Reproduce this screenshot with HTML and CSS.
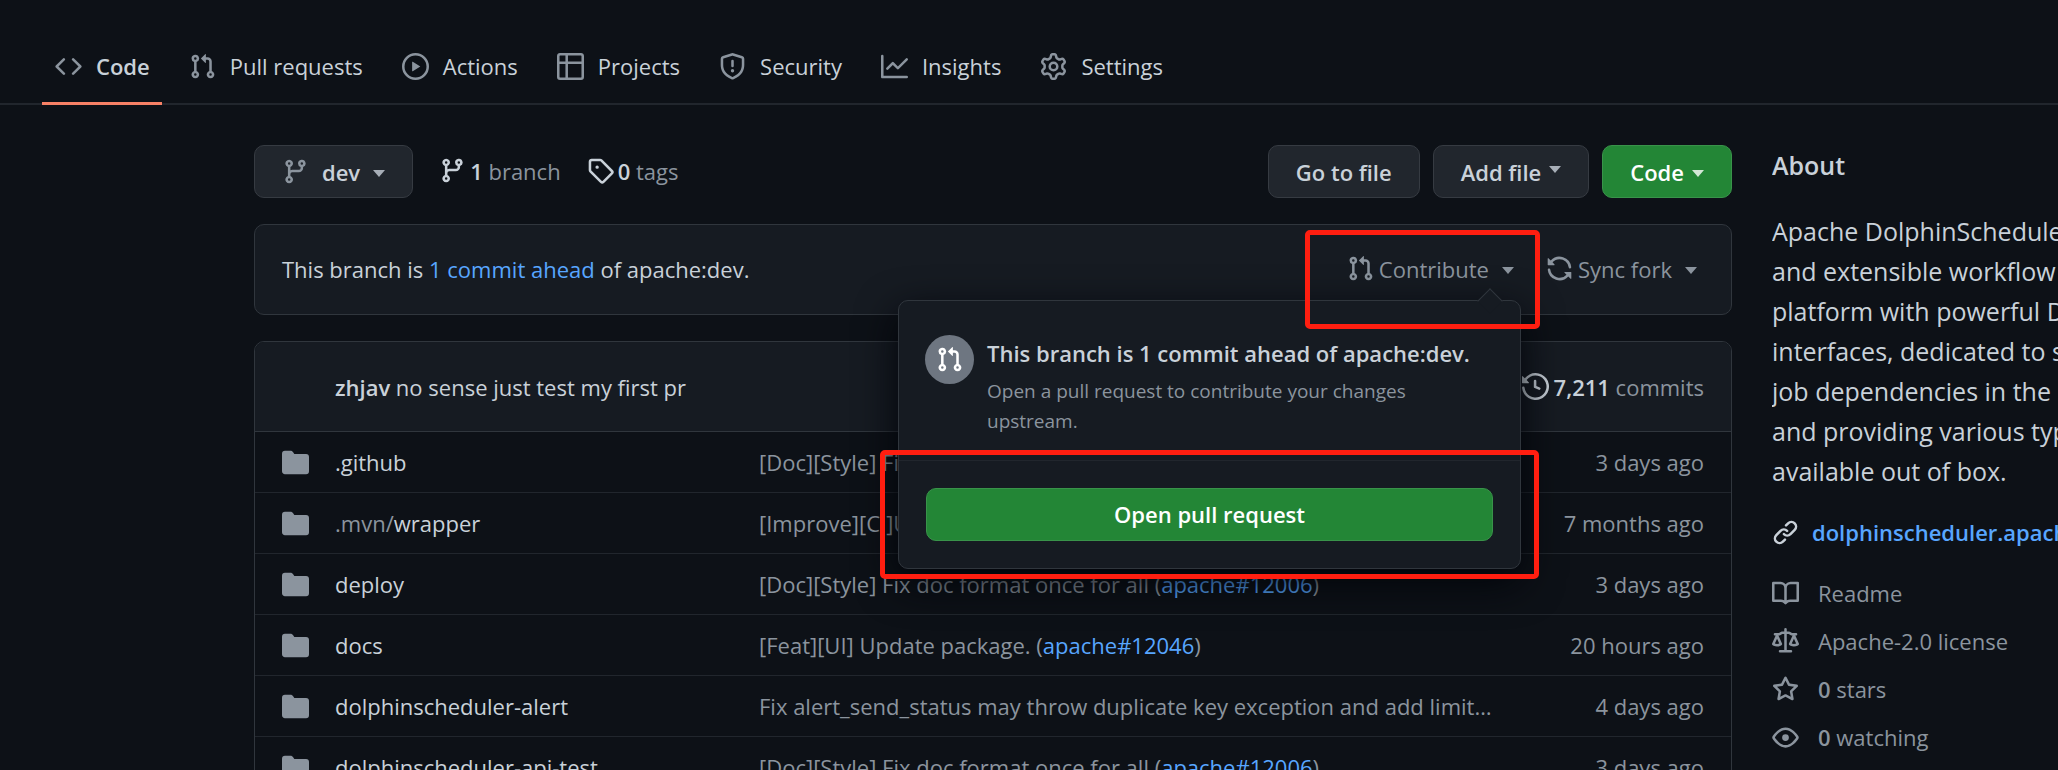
FILE: index.html
```html
<!DOCTYPE html>
<html lang="en">
<head>
<meta charset="utf-8">
<title>dolphinscheduler</title>
<link rel="stylesheet" href="styles.css">
</head>
<body>
<svg class="sprite" aria-hidden="true">
  <symbol id="code" viewBox="0 0 16 16"><path d="M4.72 3.22a.75.75 0 011.06 1.06L2.06 8l3.72 3.72a.75.75 0 11-1.06 1.06L.47 8.53a.75.75 0 010-1.06l4.25-4.25zm6.56 0a.75.75 0 10-1.06 1.06L13.94 8l-3.72 3.72a.75.75 0 101.06 1.06l4.25-4.25a.75.75 0 000-1.06l-4.25-4.25z"/></symbol>
  <symbol id="pr" viewBox="0 0 16 16"><path fill-rule="evenodd" d="M7.177 3.073L9.573.677A.25.25 0 0110 .854v4.792a.25.25 0 01-.427.177L7.177 3.427a.25.25 0 010-.354zM3.75 2.5a.75.75 0 100 1.5.75.75 0 000-1.5zm-2.25.75a2.25 2.25 0 113 2.122v5.256a2.251 2.251 0 11-1.5 0V5.372A2.25 2.25 0 011.5 3.25zM11 2.5h-1V4h1a1 1 0 011 1v5.628a2.251 2.251 0 101.5 0V5A2.5 2.5 0 0011 2.5zm1 10.25a.75.75 0 111.5 0 .75.75 0 01-1.5 0zM3.75 12a.75.75 0 100 1.5.75.75 0 000-1.5z"/></symbol>
  <symbol id="branch" viewBox="0 0 16 16"><path fill-rule="evenodd" d="M11.75 2.5a.75.75 0 100 1.5.75.75 0 000-1.5zm-2.25.75a2.25 2.25 0 113 2.122V6A2.5 2.5 0 0110 8.5H6a1 1 0 00-1 1v1.128a2.251 2.251 0 11-1.5 0V5.372a2.25 2.25 0 111.5 0v1.836A2.492 2.492 0 016 7h4a1 1 0 001-1v-.628A2.25 2.25 0 019.5 3.25zM4.25 12a.75.75 0 100 1.5.75.75 0 000-1.5zM3.5 3.25a.75.75 0 111.5 0 .75.75 0 01-1.5 0z"/></symbol>
  <symbol id="play" viewBox="0 0 16 16"><path fill-rule="evenodd" d="M1.5 8a6.5 6.5 0 1113 0 6.5 6.5 0 01-13 0zM8 0a8 8 0 100 16A8 8 0 008 0zM6.379 5.227A.25.25 0 006 5.442v5.117a.25.25 0 00.379.214l4.264-2.559a.25.25 0 000-.428L6.379 5.227z"/></symbol>
  <symbol id="table" viewBox="0 0 16 16"><path fill-rule="evenodd" d="M0 1.75C0 .784.784 0 1.75 0h12.5C15.216 0 16 .784 16 1.75v12.5A1.75 1.75 0 0114.25 16H1.75A1.75 1.75 0 010 14.25V1.75zM1.5 6.5v7.75c0 .138.112.25.25.25H5v-8H1.5zM6.5 6.5v8h7.75a.25.25 0 00.25-.25V6.5h-8zM14.5 5V1.75a.25.25 0 00-.25-.25H6.5V5h8zM5 5V1.5H1.75a.25.25 0 00-.25.25V5H5z"/></symbol>
  <symbol id="shield" viewBox="0 0 16 16"><path fill-rule="evenodd" d="M7.467.133a1.75 1.75 0 011.066 0l5.25 1.68A1.75 1.75 0 0115 3.48V7c0 1.566-.32 3.182-1.303 4.682-.983 1.498-2.585 2.813-5.032 3.855a1.7 1.7 0 01-1.33 0c-2.447-1.042-4.049-2.357-5.032-3.855C1.32 10.182 1 8.566 1 7V3.48a1.75 1.75 0 011.217-1.667l5.25-1.68zm.61 1.429a.25.25 0 00-.153 0l-5.25 1.68a.25.25 0 00-.174.238V7c0 1.358.275 2.666 1.057 3.86.784 1.194 2.121 2.34 4.366 3.297a.2.2 0 00.154 0c2.245-.956 3.582-2.104 4.366-3.298C13.225 9.666 13.5 8.36 13.5 7V3.48a.25.25 0 00-.174-.237l-5.25-1.68zM9 10.5a1 1 0 11-2 0 1 1 0 012 0zm-.25-5.75a.75.75 0 10-1.5 0v3a.75.75 0 001.5 0v-3z"/></symbol>
  <symbol id="graph" viewBox="0 0 16 16"><path fill-rule="evenodd" d="M1.5 1.75a.75.75 0 00-1.5 0v12.5c0 .414.336.75.75.75h14.5a.75.75 0 000-1.5H1.5V1.75zm14.28 2.53a.75.75 0 00-1.06-1.06L10 7.94 7.53 5.47a.75.75 0 00-1.06 0L3.22 8.72a.75.75 0 001.06 1.06L7 7.06l2.47 2.47a.75.75 0 001.06 0l5.25-5.25z"/></symbol>
  <symbol id="gear" viewBox="0 0 16 16"><path fill-rule="evenodd" d="M7.429 1.525a6.593 6.593 0 011.142 0c.036.003.108.036.137.146l.289 1.105c.147.56.55.967.997 1.189.174.086.341.183.501.29.417.278.97.423 1.53.27l1.102-.303c.11-.03.175.016.195.046.219.31.41.641.573.989.014.031.022.11-.059.19l-.815.806c-.411.406-.562.957-.53 1.456a4.588 4.588 0 010 .582c-.032.499.119 1.05.53 1.456l.815.806c.08.08.073.159.059.19a6.494 6.494 0 01-.573.99c-.02.029-.086.074-.195.045l-1.103-.303c-.559-.153-1.112-.008-1.529.27-.16.107-.327.204-.5.29-.449.222-.851.628-.998 1.189l-.289 1.105c-.029.11-.101.143-.137.146a6.613 6.613 0 01-1.142 0c-.036-.003-.108-.037-.137-.146l-.289-1.105c-.147-.56-.55-.967-.997-1.189a4.502 4.502 0 01-.501-.29c-.417-.278-.97-.423-1.53-.27l-1.102.303c-.11.03-.175-.016-.195-.046a6.492 6.492 0 01-.573-.989c-.014-.031-.022-.11.059-.19l.815-.806c.411-.406.562-.957.53-1.456a4.587 4.587 0 010-.582c.032-.499-.119-1.05-.53-1.456l-.815-.806c-.08-.08-.073-.159-.059-.19a6.44 6.44 0 01.573-.99c.02-.029.086-.075.195-.045l1.103.303c.559.153 1.112.008 1.529-.27.16-.107.327-.204.5-.29.449-.222.851-.628.998-1.189l.289-1.105c.029-.11.101-.143.137-.146zM8 0c-.236 0-.47.01-.701.03-.743.065-1.29.615-1.458 1.261l-.29 1.106c-.017.066-.078.158-.211.224a5.994 5.994 0 00-.668.386c-.123.082-.233.09-.3.071L3.27 2.776c-.644-.177-1.392.02-1.82.63a7.977 7.977 0 00-.704 1.217c-.315.675-.111 1.422.363 1.891l.815.806c.05.048.098.147.088.294a6.084 6.084 0 000 .772c.01.147-.038.246-.088.294l-.815.806c-.474.469-.678 1.216-.363 1.891.2.428.436.835.704 1.218.428.609 1.176.806 1.82.63l1.103-.303c.066-.019.176-.011.299.071.213.143.436.272.668.386.133.066.194.158.212.224l.289 1.106c.169.646.715 1.196 1.458 1.26a8.094 8.094 0 001.402 0c.743-.064 1.29-.614 1.458-1.26l.29-1.106c.017-.066.078-.158.211-.224a5.98 5.98 0 00.668-.386c.123-.082.233-.09.3-.071l1.102.302c.644.177 1.392-.02 1.82-.63.268-.382.505-.789.704-1.217.315-.675.111-1.422-.364-1.891l-.814-.806c-.05-.048-.098-.147-.088-.294a6.1 6.1 0 000-.772c-.01-.147.039-.246.088-.294l.814-.806c.475-.469.679-1.216.364-1.891a7.992 7.992 0 00-.704-1.218c-.428-.609-1.176-.806-1.82-.63l-1.103.303c-.066.019-.176.011-.299-.071a5.991 5.991 0 00-.668-.386c-.133-.066-.194-.158-.212-.224L10.16 1.29C9.99.645 9.444.095 8.701.031A8.094 8.094 0 008 0zm1.5 8a1.5 1.5 0 11-3 0 1.5 1.5 0 013 0zM11 8a3 3 0 11-6 0 3 3 0 016 0z"/></symbol>
  <symbol id="tag" viewBox="0 0 16 16"><path fill-rule="evenodd" d="M2.5 7.775V2.75a.25.25 0 01.25-.25h5.025a.25.25 0 01.177.073l6.25 6.25a.25.25 0 010 .354l-5.025 5.025a.25.25 0 01-.354 0l-6.25-6.25a.25.25 0 01-.073-.177zm-1.5 0V2.75C1 1.784 1.784 1 2.75 1h5.025c.464 0 .91.184 1.238.513l6.25 6.25a1.75 1.75 0 010 2.474l-5.026 5.026a1.75 1.75 0 01-2.474 0l-6.25-6.25A1.75 1.75 0 011 7.775zM6 5a1 1 0 100 2 1 1 0 000-2z"/></symbol>
  <symbol id="sync" viewBox="0 0 16 16"><path fill-rule="evenodd" d="M8 2.5a5.487 5.487 0 00-4.131 1.869l1.204 1.204A.25.25 0 014.896 6H1.25A.25.25 0 011 5.75V2.104a.25.25 0 01.427-.177l1.38 1.38A7.001 7.001 0 0114.95 7.16a.75.75 0 11-1.49.178A5.501 5.501 0 008 2.5zM1.705 8.005a.75.75 0 01.834.656 5.501 5.501 0 009.592 2.97l-1.204-1.204a.25.25 0 01.177-.427h3.646a.25.25 0 01.25.25v3.646a.25.25 0 01-.427.177l-1.38-1.38A7.001 7.001 0 011.05 8.84a.75.75 0 01.656-.834z"/></symbol>
  <symbol id="history" viewBox="0 0 16 16"><path fill-rule="evenodd" d="M1.643 3.143L.427 1.927A.25.25 0 000 2.104V5.75c0 .138.112.25.25.25h3.646a.25.25 0 00.177-.427L2.715 4.215a6.5 6.5 0 11-1.18 4.458.75.75 0 10-1.493.154 8.001 8.001 0 101.6-5.684zM7.75 4a.75.75 0 01.75.75v2.992l2.028.812a.75.75 0 01-.557 1.392l-2.5-1A.75.75 0 017 8.25v-3.5A.75.75 0 017.75 4z"/></symbol>
  <symbol id="folder" viewBox="0 0 16 16"><path d="M1.75 1A1.75 1.75 0 000 2.75v10.5C0 14.216.784 15 1.75 15h12.5A1.75 1.75 0 0016 13.25v-8.5A1.75 1.75 0 0014.25 3H7.5a.25.25 0 01-.2-.1l-.9-1.2C6.07 1.26 5.55 1 5 1H1.75z"/></symbol>
  <symbol id="link" viewBox="0 0 16 16"><path fill-rule="evenodd" d="M7.775 3.275a.75.75 0 001.06 1.06l1.25-1.25a2 2 0 112.83 2.83l-2.5 2.5a2 2 0 01-2.83 0 .75.75 0 00-1.06 1.06 3.5 3.5 0 004.95 0l2.5-2.5a3.5 3.5 0 00-4.95-4.95l-1.25 1.25zm-4.69 9.64a2 2 0 010-2.83l2.5-2.5a2 2 0 012.83 0 .75.75 0 001.06-1.06 3.5 3.5 0 00-4.95 0l-2.5 2.5a3.5 3.5 0 004.95 4.95l1.25-1.25a.75.75 0 00-1.06-1.06l-1.25 1.25a2 2 0 01-2.83 0z"/></symbol>
  <symbol id="book" viewBox="0 0 16 16"><path fill-rule="evenodd" d="M0 1.75A.75.75 0 01.75 1h4.253c1.227 0 2.317.59 3 1.501A3.744 3.744 0 0111.006 1h4.245a.75.75 0 01.75.75v10.5a.75.75 0 01-.75.75h-4.507a2.25 2.25 0 00-1.591.659l-.622.621a.75.75 0 01-1.06 0l-.622-.621A2.25 2.25 0 005.258 13H.75a.75.75 0 01-.75-.75V1.75zm8.755 3a2.25 2.25 0 012.25-2.25H14.5v9h-3.757c-.71 0-1.4.201-1.992.572l.004-7.322zm-1.504 7.324l.004-5.073-.002-2.253A2.25 2.25 0 005.003 2.5H1.5v9h3.757a3.75 3.75 0 011.994.574z"/></symbol>
  <symbol id="law" viewBox="0 0 16 16"><path fill-rule="evenodd" d="M8.75.75a.75.75 0 00-1.5 0V2h-.984c-.305 0-.604.08-.869.23l-1.288.737A.25.25 0 013.984 3H1.75a.75.75 0 000 1.5h.428L.066 9.192a.75.75 0 00.154.838l.53-.53-.53.53v.001l.002.002.002.002.006.006.016.015.045.04a3.514 3.514 0 00.686.45A4.492 4.492 0 003 11c.88 0 1.556-.22 2.023-.454a3.515 3.515 0 00.686-.45l.045-.04.016-.015.006-.006.002-.002.001-.002L5.25 9.5l.53.53a.75.75 0 00.154-.838L3.822 4.5h.162c.305 0 .604-.08.869-.23l1.289-.737a.25.25 0 01.124-.033h.984V13h-2.5a.75.75 0 000 1.5h6.5a.75.75 0 000-1.5h-2.5V3.5h.984a.25.25 0 01.124.033l1.29.736c.264.152.563.231.868.231h.162l-2.112 4.692a.75.75 0 00.154.838l.53-.53-.53.53v.001l.002.002.002.002.006.006.016.015.045.04a3.517 3.517 0 00.686.45A4.492 4.492 0 0013 11c.88 0 1.556-.22 2.023-.454a3.512 3.512 0 00.686-.45l.045-.04.01-.01.006-.005.006-.006.002-.002.001-.002-.529-.531.53.53a.75.75 0 00.154-.838L13.823 4.5h.427a.75.75 0 000-1.5h-2.234a.25.25 0 01-.124-.033l-1.29-.736A1.75 1.75 0 009.735 2H8.75V.75zM1.695 9.227c.285.135.718.273 1.305.273s1.02-.138 1.305-.273L3 6.327l-1.305 2.9zm10 0c.285.135.718.273 1.305.273s1.02-.138 1.305-.273L13 6.327l-1.305 2.9z"/></symbol>
  <symbol id="star" viewBox="0 0 16 16"><path fill-rule="evenodd" d="M8 .25a.75.75 0 01.673.418l1.882 3.815 4.21.612a.75.75 0 01.416 1.279l-3.046 2.97.719 4.192a.75.75 0 01-1.088.791L8 12.347l-3.766 1.98a.75.75 0 01-1.088-.79l.72-4.194L.818 6.374a.75.75 0 01.416-1.28l4.21-.611L7.327.668A.75.75 0 018 .25zm0 2.445L6.615 5.5a.75.75 0 01-.564.41l-3.097.45 2.24 2.184a.75.75 0 01.216.664l-.528 3.084 2.769-1.456a.75.75 0 01.698 0l2.77 1.456-.53-3.084a.75.75 0 01.216-.664l2.24-2.183-3.096-.45a.75.75 0 01-.564-.41L8 2.694v.001z"/></symbol>
  <symbol id="eye" viewBox="0 0 16 16"><path fill-rule="evenodd" d="M1.679 7.932c.412-.621 1.242-1.75 2.366-2.717C5.175 4.242 6.527 3.5 8 3.5c1.473 0 2.824.742 3.955 1.715 1.124.967 1.954 2.096 2.366 2.717a.119.119 0 010 .136c-.412.621-1.242 1.75-2.366 2.717C10.825 11.758 9.473 12.5 8 12.5c-1.473 0-2.824-.742-3.955-1.715C2.92 9.818 2.09 8.69 1.679 8.068a.119.119 0 010-.136zM8 2c-1.981 0-3.67.992-4.933 2.078C1.797 5.169.88 6.423.43 7.1a1.619 1.619 0 000 1.798c.45.678 1.367 1.932 2.637 3.024C4.329 13.008 6.019 14 8 14c1.981 0 3.67-.992 4.933-2.078 1.27-1.091 2.187-2.345 2.637-3.023a1.619 1.619 0 000-1.798c-.45-.678-1.367-1.932-2.637-3.023C11.671 2.992 9.981 2 8 2zm0 8a2 2 0 100-4 2 2 0 000 4z"/></symbol>
</svg>

<nav class="repo-nav" aria-label="Repository">
  <a class="tab tab-current" href="#"><svg class="icon"><use href="#code"/></svg>Code</a>
  <a class="tab" href="#"><svg class="icon"><use href="#pr"/></svg>Pull requests</a>
  <a class="tab" href="#"><svg class="icon"><use href="#play"/></svg>Actions</a>
  <a class="tab" href="#"><svg class="icon"><use href="#table"/></svg>Projects</a>
  <a class="tab" href="#"><svg class="icon"><use href="#shield"/></svg>Security</a>
  <a class="tab" href="#"><svg class="icon"><use href="#graph"/></svg>Insights</a>
  <a class="tab" href="#"><svg class="icon"><use href="#gear"/></svg>Settings</a>
</nav>

<div class="layout">
  <main class="content">
    <div class="toolbar">
      <button class="btn btn-branch" type="button"><svg class="icon"><use href="#branch"/></svg>dev<span class="caret"></span></button>
      <a class="ref-link" href="#"><svg class="icon"><use href="#branch"/></svg><span><strong>1</strong> branch</span></a>
      <a class="ref-link" href="#"><svg class="icon"><use href="#tag"/></svg><span><strong>0</strong> tags</span></a>
      <div class="actions">
        <button class="btn" type="button">Go to file</button>
        <button class="btn btn-add" type="button">Add file<span class="caret"></span></button>
        <button class="btn btn-primary" type="button">Code<span class="caret"></span></button>
      </div>
    </div>

    <section class="branch-info">
      <p class="branch-text">This branch is <a class="link" href="#">1 commit ahead</a> of apache:dev.</p>
      <div class="contribute">
        <button class="text-btn" type="button"><svg class="icon"><use href="#pr"/></svg>Contribute<span class="caret"></span></button>
        <div class="popover">
          <div class="popover-info">
            <span class="badge"><svg class="icon"><use href="#pr"/></svg></span>
            <div>
              <h2 class="popover-title">This branch is 1 commit ahead of apache:dev.</h2>
              <p class="popover-note">Open a pull request to contribute your changes upstream.</p>
            </div>
          </div>
          <div class="popover-action">
            <button class="btn btn-primary btn-block" type="button">Open pull request</button>
          </div>
          <span class="mark mark-action"></span>
        </div>
        <span class="mark mark-contribute"></span>
      </div>
      <button class="text-btn" type="button"><svg class="icon"><use href="#sync"/></svg>Sync fork<span class="caret"></span></button>
    </section>

    <section class="files">
      <div class="latest">
        <p><strong>zhjav</strong> no sense just test my first pr</p>
        <a class="history" href="#"><svg class="icon"><use href="#history"/></svg><span><strong>7,211</strong> commits</span></a>
      </div>
      <table class="file-table">
        <tbody>
          <tr><td class="kind"><svg class="icon"><use href="#folder"/></svg></td><td class="name"><a href="#">.github</a></td><td class="message">[Doc][Style] Fix doc format once for all (<a class="link" href="#">apache#12006</a>)</td><td class="age">3 days ago</td></tr>
          <tr><td class="kind"><svg class="icon"><use href="#folder"/></svg></td><td class="name"><a href="#"><span class="dim">.mvn/</span>wrapper</a></td><td class="message">[Improve][CI]Use maven wrapper</td><td class="age">7 months ago</td></tr>
          <tr><td class="kind"><svg class="icon"><use href="#folder"/></svg></td><td class="name"><a href="#">deploy</a></td><td class="message">[Doc][Style] Fix doc format once for all (<a class="link" href="#">apache#12006</a>)</td><td class="age">3 days ago</td></tr>
          <tr><td class="kind"><svg class="icon"><use href="#folder"/></svg></td><td class="name"><a href="#">docs</a></td><td class="message">[Feat][UI] Update package. (<a class="link" href="#">apache#12046</a>)</td><td class="age">20 hours ago</td></tr>
          <tr><td class="kind"><svg class="icon"><use href="#folder"/></svg></td><td class="name"><a href="#">dolphinscheduler-alert</a></td><td class="message">Fix alert_send_status may throw duplicate key exception and add limit…</td><td class="age">4 days ago</td></tr>
          <tr><td class="kind"><svg class="icon"><use href="#folder"/></svg></td><td class="name"><a href="#">dolphinscheduler-api-test</a></td><td class="message">[Doc][Style] Fix doc format once for all (<a class="link" href="#">apache#12006</a>)</td><td class="age">3 days ago</td></tr>
        </tbody>
      </table>
    </section>
  </main>

  <aside class="sidebar">
    <h2 class="about-title">About</h2>
    <p class="about-text">Apache DolphinScheduler is a distributed<br>and extensible workflow scheduler<br>platform with powerful DAG visual<br>interfaces, dedicated to solving complex<br>job dependencies in the data pipeline<br>and providing various types of jobs<br>available out of box.</p>
    <p class="site"><svg class="icon"><use href="#link"/></svg><a class="link" href="#">dolphinscheduler.apache.org/</a></p>
    <ul class="facts">
      <li><a href="#"><svg class="icon"><use href="#book"/></svg>Readme</a></li>
      <li><a href="#"><svg class="icon"><use href="#law"/></svg>Apache-2.0 license</a></li>
      <li><a href="#"><svg class="icon"><use href="#star"/></svg><span><strong>0</strong> stars</span></a></li>
      <li><a href="#"><svg class="icon"><use href="#eye"/></svg><span><strong>0</strong> watching</span></a></li>
    </ul>
  </aside>
</div>
</body>
</html>
```
FILE: styles.css
```css
* { box-sizing: border-box; }

html, body { height: 100%; }

body {
  margin: 0;
  overflow: hidden;
  background: #0d1117;
  color: #c9d1d9;
  font: 22px/32px "Open Sans", "Noto Sans", sans-serif;
}

h2, p, ul { margin: 0; padding: 0; }
a { color: inherit; text-decoration: none; }
strong, h2 { font-weight: 600; }
button { font: inherit; cursor: pointer; }

.sprite { display: none; }
.icon { width: 27px; height: 27px; flex: none; fill: currentColor; }
.link { color: #58a6ff; }

.caret {
  flex: none;
  margin-top: 4px;
  border: 6px solid transparent;
  border-top: 7px solid currentColor;
  border-bottom-width: 0;
  opacity: 0.8;
}

/* Repository tabs */
.repo-nav {
  display: flex;
  gap: 14px;
  padding: 30px 42px 0;
  border-bottom: 2px solid #21262d;
}
.tab {
  display: flex;
  align-items: center;
  gap: 14px;
  height: 75px;
  margin-bottom: -2px;
  padding: 0 12px 0 13px;
  border-bottom: 3px solid transparent;
  white-space: nowrap;
}
.tab .icon { color: #8b949e; }
.tab-current { border-bottom-color: #f78166; font-weight: 600; }

/* Page columns */
.layout {
  display: grid;
  grid-template-columns: minmax(0, 1fr) 286px;
  gap: 40px;
  padding: 40px 0 0 254px;
}

/* Toolbar */
.toolbar { display: flex; align-items: center; gap: 26px; margin-bottom: 26px; }
.actions { display: flex; gap: 13px; margin-left: auto; }
.btn {
  display: flex;
  align-items: center;
  justify-content: center;
  gap: 8px;
  height: 53px;
  padding: 0 27px;
  border: 1px solid #363b42;
  border-radius: 10px;
  background: #21262d;
  color: #c9d1d9;
  font-weight: 600;
  white-space: nowrap;
}
.btn-branch { gap: 13px; }
.btn-branch .icon { color: #8b949e; }
.btn-add .caret { margin: 0 0 5px; }
.btn-primary { border-color: #39934a; background: #238636; color: #fff; }
.btn-block { width: 100%; }
.ref-link { display: flex; align-items: center; gap: 4px; padding-bottom: 2px; color: #8b949e; }
.ref-link .icon, .ref-link strong { color: #c9d1d9; }

/* Branch comparison */
.branch-info {
  display: flex;
  align-items: center;
  gap: 32px;
  height: 91px;
  margin-bottom: 26px;
  padding: 0 34px 2px 27px;
  border: 1px solid #30363d;
  border-radius: 10px;
  background: #161b22;
}
.branch-text { flex: 1; }
.text-btn {
  display: flex;
  align-items: center;
  gap: 5px;
  padding: 0;
  border: 0;
  background: none;
  color: #8b949e;
}
.text-btn .caret { margin-left: 8px; opacity: 1; }
.contribute { position: relative; z-index: 2; }

.popover {
  position: absolute;
  top: 47px;
  right: -7px;
  width: 623px;
  border: 1px solid #30363d;
  border-radius: 10px;
  background: #161b22;
  box-shadow: 0 13px 40px #010409;
}
.popover::before {
  content: "";
  position: absolute;
  top: -9px;
  right: 21px;
  width: 17px;
  height: 17px;
  border: solid #30363d;
  border-width: 1px 0 0 1px;
  background: #161b22;
  transform: rotate(45deg);
}
.popover-info {
  display: flex;
  gap: 13px;
  padding: 34px 60px 24px 26px;
  border-bottom: 1px solid #21262d;
}
.badge {
  display: grid;
  place-items: center;
  flex: none;
  width: 49px;
  height: 49px;
  border-radius: 50%;
  background: #6e7681;
  color: #fff;
}
.popover-title { font-size: 22px; line-height: 36px; white-space: nowrap; }
.popover-note { padding-top: 5px; color: #8b949e; font-size: 19px; line-height: 30px; }
.popover-action { padding: 27px; }

.mark {
  position: absolute;
  border: 5px solid #ff1e10;
  border-radius: 5px;
  pointer-events: none;
}
.mark-contribute { top: -23px; right: -26px; width: 235px; height: 99px; }
.mark-action { right: -19px; bottom: -11px; left: -19px; height: 129px; }

/* File list */
.files { border: 1px solid #30363d; border-radius: 10px; overflow: hidden; }
.latest {
  display: flex;
  align-items: center;
  justify-content: space-between;
  height: 90px;
  padding: 0 27px 0 80px;
  border-bottom: 1px solid #30363d;
  background: #161b22;
}
.history { display: flex; align-items: center; gap: 5px; color: #8b949e; }
.history .icon, .history strong { color: #c9d1d9; }

.file-table { width: 100%; border-collapse: collapse; table-layout: fixed; }
.file-table td { height: 61px; padding: 0; white-space: nowrap; }
.file-table tr:first-child td { height: 60px; }
.file-table tr + tr td { border-top: 1px solid #21262d; }
.file-table .icon { display: block; }
.file-table .kind { width: 80px; padding: 2px 0 0 27px; color: #8b949e; }
.name { width: 424px; }
.message { color: #8b949e; }
.file-table .age { width: 200px; padding-right: 27px; color: #8b949e; text-align: right; }
.dim { color: #8b949e; }

/* Sidebar */
.sidebar { overflow: hidden; white-space: nowrap; }
.about-title { margin-bottom: 26px; font-size: 25px; line-height: 40px; }
.about-text { margin-bottom: 25px; font-size: 25px; line-height: 40px; }
.site { display: flex; align-items: center; gap: 13px; margin-bottom: 21px; font-weight: 600; }
.facts { list-style: none; color: #8b949e; }
.facts a { display: flex; align-items: center; gap: 19px; height: 48px; }
```
